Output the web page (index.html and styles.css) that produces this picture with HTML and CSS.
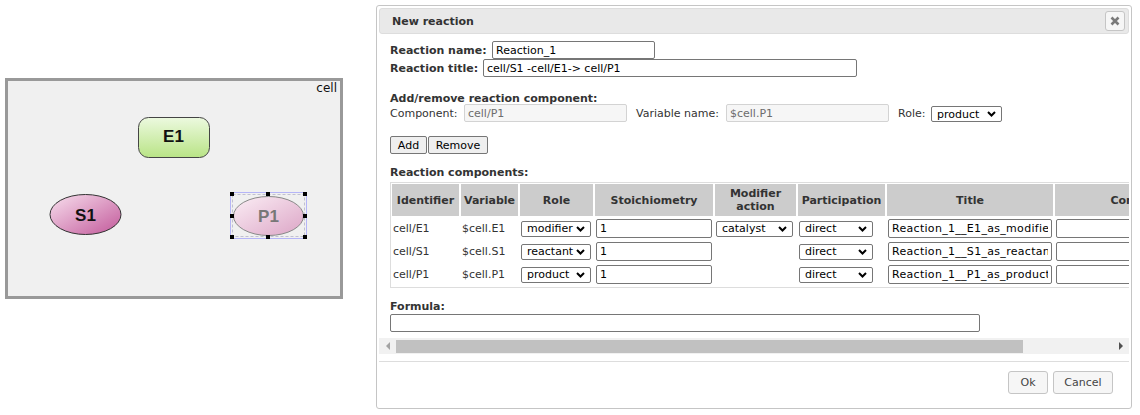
FILE: index.html
```html
<!DOCTYPE html>
<html>
<head>
<meta charset="utf-8">
<link rel="stylesheet" href="styles.css">
</head>
<body>
<div class="canvas">
  <svg width="338" height="221" viewBox="0 0 338 221">
    <defs>
      <linearGradient id="gE" x1="0" y1="0" x2="0" y2="1">
        <stop offset="0" stop-color="#ecf9df"/>
        <stop offset="1" stop-color="#b9e486"/>
      </linearGradient>
      <linearGradient id="gS" x1="0" y1="0" x2="1" y2="1">
        <stop offset="0" stop-color="#f8e0ee"/>
        <stop offset="1" stop-color="#c2589a"/>
      </linearGradient>
      <linearGradient id="gP" x1="0" y1="0" x2="1" y2="1">
        <stop offset="0" stop-color="#fbeef5"/>
        <stop offset="1" stop-color="#dca5c6"/>
      </linearGradient>
    </defs>
    <rect x="1.5" y="1.5" width="335" height="218" fill="#f0f0f0" stroke="#999" stroke-width="3"/>
    <text class="cell-label" x="332" y="14" text-anchor="end">cell</text>
    <rect x="133.5" y="39.5" width="71" height="40" rx="10" fill="url(#gE)" stroke="#444"/>
    <text class="node-label" x="168.5" y="64" text-anchor="middle">E1</text>
    <ellipse cx="80.5" cy="136.5" rx="35.5" ry="20" fill="url(#gS)" stroke="#333"/>
    <text class="node-label" x="80.5" y="142.5" text-anchor="middle">S1</text>
    <rect x="227.5" y="116.5" width="72" height="42" fill="none" stroke="#c0c0d0" stroke-dasharray="3 2"/>
    <ellipse cx="263.5" cy="138" rx="35" ry="19.5" fill="url(#gP)" stroke="#888"/>
    <text class="node-label faded" x="263.5" y="143.5" text-anchor="middle">P1</text>
    <rect x="225.5" y="114.5" width="76" height="46" fill="none" stroke="#7b7bff" stroke-dasharray="1 1"/>
    <g fill="#000">
      <rect x="225" y="114" width="4" height="4"/>
      <rect x="261" y="114" width="4" height="4"/>
      <rect x="298" y="114" width="4" height="4"/>
      <rect x="225" y="136" width="4" height="4"/>
      <rect x="298" y="136" width="4" height="4"/>
      <rect x="225" y="157" width="4" height="4"/>
      <rect x="261" y="157" width="4" height="4"/>
      <rect x="298" y="157" width="4" height="4"/>
    </g>
  </svg>
</div>

<div class="dialog">
  <div class="titlebar">
    <span class="title">New reaction</span>
    <span class="close">
      <svg width="10" height="10" viewBox="0 0 10 10"><path d="M1.5 1.5 L8.5 8.5 M8.5 1.5 L1.5 8.5" stroke="#7a7a7a" stroke-width="2.6"/></svg>
    </span>
  </div>

  <div class="scrollarea">
    <div class="row">
      <span class="lbl b w-l-name">Reaction name:</span>
      <input class="txt w-name" type="text" value="Reaction_1">
    </div>
    <div class="row">
      <span class="lbl b w-l-title">Reaction title:</span>
      <input class="txt w-title" type="text" value="cell/S1 -cell/E1-&gt; cell/P1">
    </div>

    <div class="section">Add/remove reaction component:</div>
    <div class="row">
      <span class="lbl w-l-comp">Component:</span>
      <input class="txt dis w-comp" type="text" value="cell/P1" disabled>
      <span class="lbl w-l-var">Variable name:</span>
      <input class="txt dis w-comp" type="text" value="$cell.P1" disabled>
      <span class="lbl w-l-role">Role:</span>
      <span class="sel w-role-top">product<svg class="chev" width="9" height="6" viewBox="0 0 9 6"><polyline points="1,1 4.5,4.5 8,1" fill="none" stroke="#000" stroke-width="2"/></svg></span>
    </div>

    <div class="btnrow">
      <button class="btn w-add">Add</button>
      <button class="btn w-remove">Remove</button>
    </div>

    <div class="section sec2">Reaction components:</div>
    <div class="tablewrap">
      <table class="comp">
        <thead>
          <tr>
            <th class="c-id">Identifier</th>
            <th class="c-var">Variable</th>
            <th class="c-role">Role</th>
            <th class="c-sto">Stoichiometry</th>
            <th class="c-mod">Modifier<br>action</th>
            <th class="c-part">Participation</th>
            <th class="c-title">Title</th>
            <th class="c-com">Comment</th>
          </tr>
        </thead>
        <tbody>
          <tr>
            <td>cell/E1</td>
            <td>$cell.E1</td>
            <td><span class="sel w-role">modifier<svg class="chev" width="9" height="6" viewBox="0 0 9 6"><polyline points="1,1 4.5,4.5 8,1" fill="none" stroke="#000" stroke-width="2"/></svg></span></td>
            <td><input class="cin" type="text" value="1"></td>
            <td><span class="sel w-mod">catalyst<svg class="chev" width="9" height="6" viewBox="0 0 9 6"><polyline points="1,1 4.5,4.5 8,1" fill="none" stroke="#000" stroke-width="2"/></svg></span></td>
            <td><span class="sel w-part">direct<svg class="chev" width="9" height="6" viewBox="0 0 9 6"><polyline points="1,1 4.5,4.5 8,1" fill="none" stroke="#000" stroke-width="2"/></svg></span></td>
            <td><input class="cin wide" type="text" value="Reaction_1__E1_as_modifier"></td>
            <td><input class="cin" type="text" value=""></td>
          </tr>
          <tr>
            <td>cell/S1</td>
            <td>$cell.S1</td>
            <td><span class="sel w-role">reactant<svg class="chev" width="9" height="6" viewBox="0 0 9 6"><polyline points="1,1 4.5,4.5 8,1" fill="none" stroke="#000" stroke-width="2"/></svg></span></td>
            <td><input class="cin" type="text" value="1"></td>
            <td></td>
            <td><span class="sel w-part">direct<svg class="chev" width="9" height="6" viewBox="0 0 9 6"><polyline points="1,1 4.5,4.5 8,1" fill="none" stroke="#000" stroke-width="2"/></svg></span></td>
            <td><input class="cin wide" type="text" value="Reaction_1__S1_as_reactant"></td>
            <td><input class="cin" type="text" value=""></td>
          </tr>
          <tr>
            <td>cell/P1</td>
            <td>$cell.P1</td>
            <td><span class="sel w-role">product<svg class="chev" width="9" height="6" viewBox="0 0 9 6"><polyline points="1,1 4.5,4.5 8,1" fill="none" stroke="#000" stroke-width="2"/></svg></span></td>
            <td><input class="cin" type="text" value="1"></td>
            <td></td>
            <td><span class="sel w-part">direct<svg class="chev" width="9" height="6" viewBox="0 0 9 6"><polyline points="1,1 4.5,4.5 8,1" fill="none" stroke="#000" stroke-width="2"/></svg></span></td>
            <td><input class="cin wide" type="text" value="Reaction_1__P1_as_product"></td>
            <td><input class="cin" type="text" value=""></td>
          </tr>
        </tbody>
      </table>
    </div>

    <div class="section sec2">Formula:</div>
    <input class="txt w-formula" type="text" value="">
  </div>

  <div class="hscroll">
    <span class="arrow"><span class="tri-left"></span></span>
    <span class="thumb"></span>
    <span class="track-rest"></span>
    <span class="arrow"><span class="tri-right"></span></span>
  </div>

  <div class="pane">
    <button class="ui-btn w-ok">Ok</button>
    <button class="ui-btn w-cancel">Cancel</button>
  </div>
</div>
</body>
</html>
```

FILE: styles.css
```css
* {
  box-sizing: border-box;
}

body {
  margin: 0;
  display: flex;
  align-items: flex-start;
  font-family: "DejaVu Sans", Verdana, sans-serif;
  font-size: 11px;
  color: #333;
  background: #fff;
}

/* ---------- diagram ---------- */
.canvas {
  margin: 78px 0 0 5px;
  width: 338px;
  height: 221px;
}

.canvas svg {
  display: block;
}

.cell-label {
  font-family: "DejaVu Sans", sans-serif;
  font-size: 12px;
  fill: #111;
}

.node-label {
  font-family: "Liberation Sans", Arial, sans-serif;
  font-weight: bold;
  font-size: 17px;
  fill: #111;
}

.node-label.faded {
  fill: #777;
}

/* ---------- dialog ---------- */
.dialog {
  margin: 5px 0 0 33px;
  width: 756px;
  height: 404px;
  border: 1px solid #c5c5c5;
  border-radius: 3px;
  padding: 2px;
  display: flex;
  flex-direction: column;
  background: #fff;
}

.titlebar {
  flex: none;
  height: 26px;
  border: 1px solid #dddddd;
  background: #e9e9e9;
  border-radius: 3px;
  display: flex;
  align-items: center;
  justify-content: space-between;
  padding: 1px 3px 0 12px;
}

.title {
  font-weight: bold;
  color: #333;
}

.close {
  width: 20px;
  height: 20px;
  margin-top: -1px;
  border: 1px solid #c5c5c5;
  background: #f6f6f6;
  border-radius: 3px;
  display: flex;
  align-items: center;
  justify-content: center;
}

.close svg {
  display: block;
}

.scrollarea {
  flex: none;
  overflow: hidden;
  padding: 7px 0 6px 11px;
}

.row {
  display: flex;
  align-items: center;
  height: 18px;
  white-space: nowrap;
}

.lbl {
  flex: none;
}

.b {
  font-weight: bold;
}

.w-l-name { width: 102px; }
.w-l-title { width: 93px; }
.w-l-comp { width: 74px; }
.w-l-var { width: 99px; padding-left: 9px; }
.w-l-role { width: 42px; padding-left: 9px; }

.txt {
  flex: none;
  display: block;
  height: 18px;
  border: 1px solid #767676;
  border-radius: 2px;
  padding: 0 3px;
  margin: 0;
  font: inherit;
  color: #000;
  background: #fff;
  outline: none;
}

.txt.dis {
  border-color: #d3d3d3;
  background: #f6f6f6;
  color: #6d6d6d;
}

.w-name { width: 163px; }
.w-title { width: 374px; }
.w-comp { width: 163px; }
.w-formula { width: 590px; margin-top: 1px; }

.section {
  font-weight: bold;
  line-height: 12px;
  height: 12px;
  margin-top: 16px;
  white-space: nowrap;
}

.section.sec2 {
  margin-top: 13px;
}

.section + .row {
  margin-top: -1px;
}

.sel {
  flex: none;
  display: inline-flex;
  align-items: center;
  justify-content: space-between;
  height: 16px;
  border: 1px solid #767676;
  border-radius: 2px;
  background: #fff;
  color: #000;
  padding: 0 5px 0 5px;
  white-space: nowrap;
  vertical-align: middle;
}

.chev {
  display: block;
  flex: none;
}

.w-role-top { width: 71px; margin-top: 2px; }
.w-role { width: 70px; }
.w-mod { width: 77px; }
.w-part { width: 74px; }

.btnrow {
  display: flex;
  gap: 1px;
  margin-top: 14px;
}

.btn {
  height: 18px;
  border: 1px solid #767676;
  border-radius: 2px;
  background: #efefef;
  padding: 0;
  margin: 0;
  font: inherit;
  color: #000;
}

.w-add { width: 37px; }
.w-remove { width: 60px; }

/* ---------- table ---------- */
.tablewrap {
  margin-top: 3px;
  border: 1px solid #dddddd;
  width: max-content;
}

.comp {
  border-collapse: separate;
  border-spacing: 2px;
  margin: -1px -1px 0 -1px;
}

.comp th {
  height: 32px;
  padding: 0;
  background: #cccccc;
  font-weight: bold;
  color: #333;
  line-height: 13px;
  text-align: center;
  vertical-align: middle;
  white-space: nowrap;
}

.comp td {
  height: 21px;
  padding: 1px;
  vertical-align: middle;
  white-space: nowrap;
  color: #333;
}

.c-id { width: 67px; }
.c-var { width: 57px; }
.c-role { width: 73px; }
.c-sto { width: 118px; }
.c-mod { width: 81px; }
.c-part { width: 87px; }
.c-title { width: 166px; }
.c-com { width: 170px; }

.cin {
  display: block;
  width: 100%;
  height: 19px;
  border: 1px solid #767676;
  border-radius: 2px;
  padding: 0 3px;
  margin: 0;
  font: inherit;
  color: #000;
  background: #fff;
  outline: none;
}

.cin.wide {
  letter-spacing: 0.3px;
}

/* ---------- fake horizontal scrollbar ---------- */
.hscroll {
  flex: none;
  height: 16px;
  background: #f1f1f1;
  display: flex;
  align-items: center;
}

.arrow {
  flex: none;
  width: 17px;
  height: 16px;
  display: flex;
  align-items: center;
  justify-content: center;
}

.tri-left {
  width: 0;
  height: 0;
  border-top: 4px solid transparent;
  border-bottom: 4px solid transparent;
  border-right: 4px solid #a3a3a3;
}

.tri-right {
  width: 0;
  height: 0;
  border-top: 4px solid transparent;
  border-bottom: 4px solid transparent;
  border-left: 4px solid #505050;
}

.thumb {
  flex: none;
  width: 627px;
  height: 13px;
  background: #c1c1c1;
}

.track-rest {
  flex: 1;
}

/* ---------- button pane ---------- */
.pane {
  flex: none;
  margin-top: 7px;
  border-top: 1px solid #dddddd;
  padding: 9px 16px 0 0;
  display: flex;
  justify-content: flex-end;
  gap: 5px;
}

.ui-btn {
  height: 23px;
  border: 1px solid #c5c5c5;
  background: #f6f6f6;
  border-radius: 3px;
  color: #454545;
  padding: 0;
  margin: 0;
  font: inherit;
}

.w-ok { width: 40px; }
.w-cancel { width: 60px; }
```
